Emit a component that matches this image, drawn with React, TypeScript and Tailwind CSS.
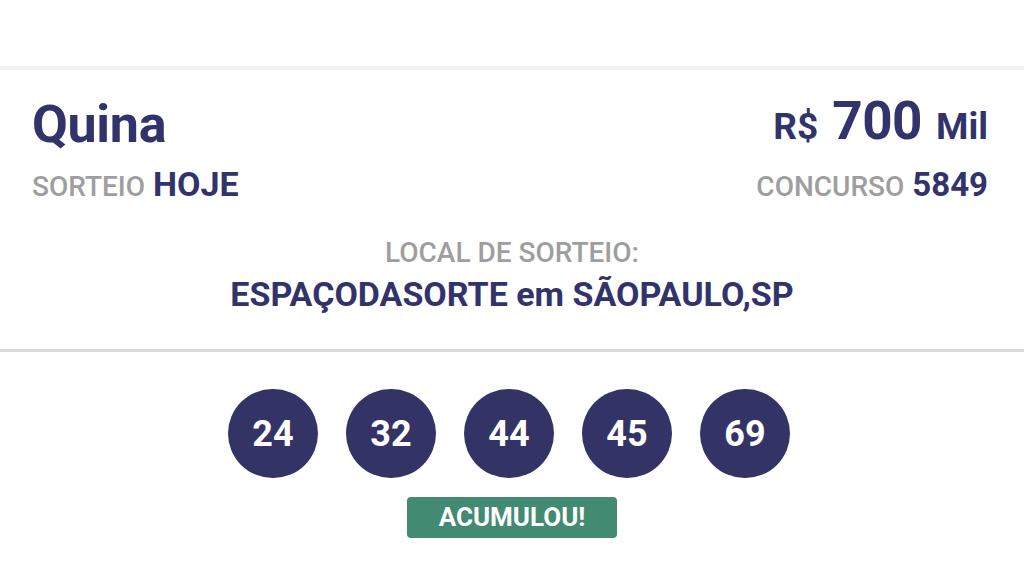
const numbers = ["24", "32", "44", "45", "69"];

export default function App() {
  return (
    <div
      className="w-[1024px] h-[573px] bg-white text-[#31336a] overflow-hidden"
      style={{ fontFamily: "Roboto, 'Liberation Sans', sans-serif" }}
    >
      <div className="h-[66px]" />
      <div className="h-[4px] bg-[#f2f2f2]" />

      <div className="pl-[32px] pr-[36px] pt-[22px]">
        <div className="flex justify-between items-end">
          <h1 className="text-[52px] font-bold leading-[58px] tracking-[-0.3px] mb-[4px]">Quina</h1>
          <div className="flex items-baseline font-bold leading-[58px] mb-[2px]">
            <span className="text-[37px]">R$</span>
            <span className="text-[53px] ml-[14px] tracking-[-0.5px]">700</span>
            <span className="text-[37px] ml-[14px]">Mil</span>
          </div>
        </div>
        <div className="flex justify-between items-baseline mt-[8px] leading-[36px]">
          <div className="flex items-baseline">
            <span className="text-[28px] font-medium text-[#9e9e9e]">SORTEIO</span>
            <span className="text-[34px] font-bold ml-[8px]">HOJE</span>
          </div>
          <div className="flex items-baseline">
            <span className="text-[28px] font-medium text-[#9e9e9e]">CONCURSO</span>
            <span className="text-[33px] font-bold ml-[8px]">5849</span>
          </div>
        </div>
      </div>

      <div className="flex flex-col items-center pt-[31px] h-[144px]">
        <div className="text-[28px] font-medium text-[#9e9e9e] leading-[34px]">LOCAL DE SORTEIO:</div>
        <div className="text-[34px] font-bold leading-[42px] mt-[3px]">ESPAÇODASORTE em SÃOPAULO,SP</div>
      </div>

      <div className="h-[3px] bg-[#dcdcdc]" />

      <div className="flex justify-center gap-[28px] mt-[37px] ml-[-6px]">
        {numbers.map((n) => (
          <div
            key={n}
            className="w-[90px] h-[89px] rounded-full bg-[#333366] text-white flex items-center justify-center text-[36px] font-bold"
          >
            {n}
          </div>
        ))}
      </div>

      <div className="flex justify-center mt-[19px]">
        <div className="w-[210px] h-[41px] rounded-[4px] bg-[#428a72] text-white text-[26px] font-bold flex items-center justify-center">
          ACUMULOU!
        </div>
      </div>
    </div>
  );
}
